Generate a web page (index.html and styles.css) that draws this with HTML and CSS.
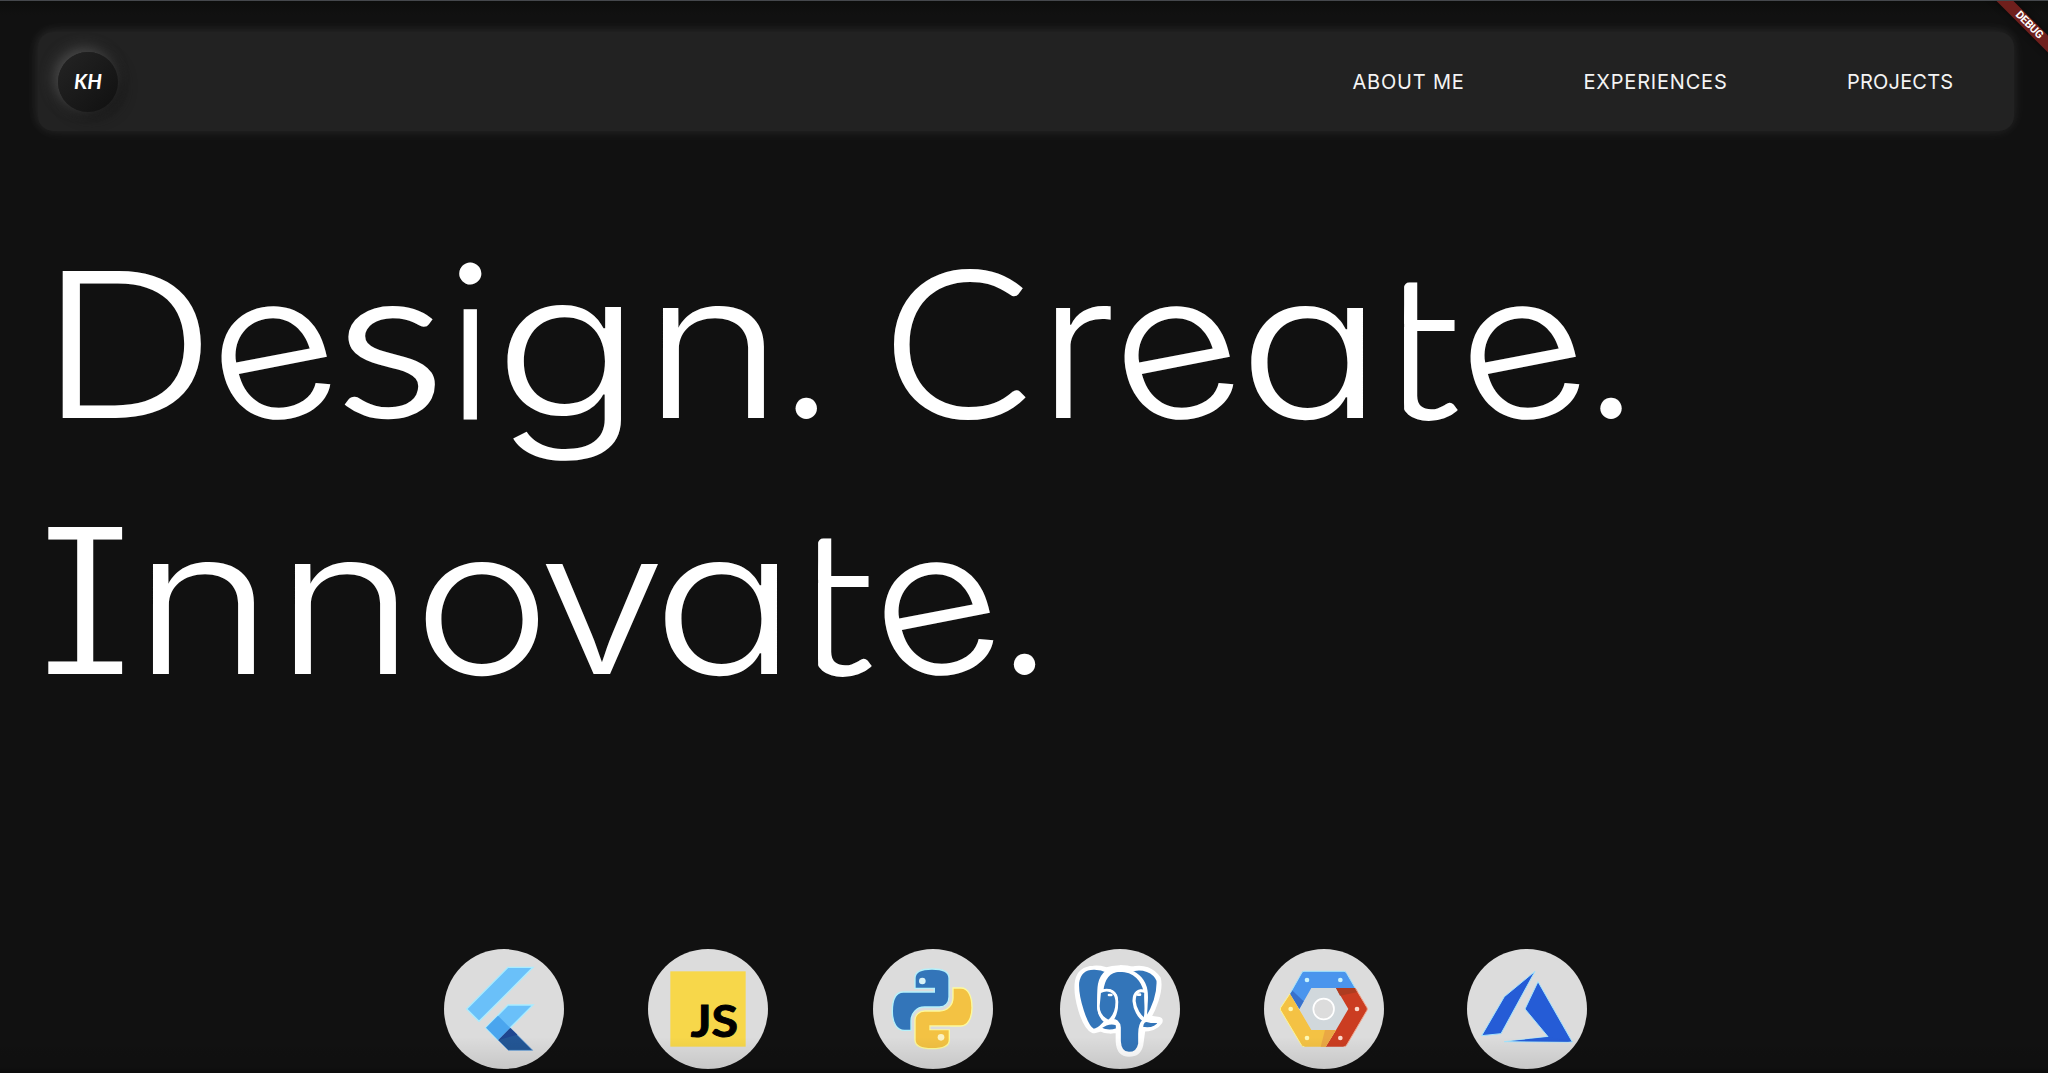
FILE: index.html
```
<!DOCTYPE html>
<html lang="en">
<head>
<meta charset="utf-8">
<title>KH</title>
<link rel="stylesheet" href="styles.css">
</head>
<body>
<div class="page">
  <header class="bar">
    <a class="logo"><span>KH</span></a>
    <nav class="nav">
      <a class="nav-about">ABOUT ME</a>
      <a class="nav-exp">EXPERIENCES</a>
      <a class="nav-proj">PROJECTS</a>
    </nav>
  </header>

  <h1 class="hero">
    <span class="line line-one"><span class="D">D</span><span class="e">e</span><span class="s">s</span><span class="i">i</span><span class="g">g</span><span class="n">n</span><span class="dot">.</span><span class="space"> </span><span class="C">C</span><span class="r">r</span><span class="e">e</span><span class="a">a</span><span class="t">t</span><span class="e">e</span><span class="dot">.</span></span>
    <span class="line line-two"><span class="I">I</span><span class="n">n</span><span class="n">n</span><span class="o">o</span><span class="v">v</span><span class="a">a</span><span class="t">t</span><span class="e">e</span><span class="dot">.</span></span>
  </h1>

  <div class="skills">
    <div class="skill">
      <svg viewBox="42 54 360 360">
        <g stroke="#a9ecff" stroke-width="4">
          <path fill="#6ac0f9" d="M234 109H309L147 271 110 234Z"/>
          <path fill="#6ac0f9" d="M234 222H309L204 327 167 290Z"/>
        </g>
        <path fill="#4aa5ee" d="M204 254L241 291 204 327 168 290Z"/>
        <path fill="#235695" stroke="#5c9ee0" stroke-width="2" d="M241 291L308 358H235L204 327Z"/>
        <path fill="#1f4690" d="M241 291L262 311 206 327Z"/>
      </svg>
    </div>
    <div class="skill">
      <svg viewBox="54 54 360 360">
        <rect x="121" y="121" width="226" height="226" fill="#f7d74a"/>
        <text class="js" x="182" y="319" textLength="142" lengthAdjust="spacingAndGlyphs">JS</text>
      </svg>
    </div>
    <div class="skill">
      <svg viewBox="69 54 360 360">
        <path fill="#3375b9" stroke="#b5f1fb" stroke-width="4" d="M246 114C212 114 195 121 195 141V172H253V183H160C138 183 127 206 127 241C127 277 141 298 163 298H183V270C183 247 199 228 224 228H268C286 228 297 215 297 198V141C297 121 279 114 246 114Z"/>
        <path fill="#f3c243" stroke="#fdfa9c" stroke-width="4" d="M246 353C212 353 195 345 195 326V268C195 250 209 240 224 240H268C294 240 309 220 309 200V171H333C354 171 366 195 366 230C366 263 352 285 333 285H240V296H298V326C298 346 279 353 246 353Z"/>
        <path fill="#dcdcdc" d="M242 287H300V295H242Z"/>
        <circle cx="217" cy="150" r="10" fill="#d9f2f7"/>
        <circle cx="273" cy="319" r="10" fill="#fbf3c4"/>
      </svg>
    </div>
    <div class="skill">
      <svg viewBox="59 54 360 360">
        <g stroke="#fff" stroke-linejoin="round" stroke-linecap="round">
          <path fill="#fff" stroke-width="24" d="M160 116C180 114 190 119 199 121C222 112 256 113 275 119C308 110 334 122 350 145C358 178 336 232 318 262C332 268 345 268 355 270C346 284 330 290 304 290L297 340C293 359 281 365 266 365C246 365 239 350 238 330V290C220 298 195 298 182 289L160 295C135 285 108 195 116 150C121 127 136 117 160 116Z"/>
          <path fill="#3375b9" stroke-width="7" d="M199 121C173 140 173 170 174 225C174 246 182 262 195 272C183 284 174 297 160 297C138 288 110 200 113 155C118 123 138 112 163 113C180 114 190 117 199 121Z"/>
          <path fill="#3375b9" stroke-width="7" d="M270 120C306 107 342 123 352 149C354 190 337 232 317 264C315 230 323 206 318 178C313 148 293 128 270 120Z"/>
          <path fill="#3375b9" stroke-width="9" d="M184 183C188 143 207 119 238 118C284 118 308 149 315 184C296 172 280 185 281 211C283 235 296 258 311 268C300 278 298 290 298 308V338C294 360 281 367 266 367C246 367 238 350 237 330V290C236 274 224 266 214 268C223 256 230 238 229 210C228 184 211 172 184 183Z"/>
          <path fill="#3375b9" stroke-width="8" d="M178 183C203 170 226 181 229 207C231 236 220 258 205 271C188 263 174 247 174 225Z"/>
          <path fill="#3375b9" stroke-width="8" d="M316 183C297 173 282 186 282 210C284 234 299 256 313 266C321 238 313 209 316 183Z"/>
          <path fill="#3375b9" stroke-width="5" d="M180 291C198 278 214 274 229 281V294C212 300 194 298 180 291Z"/>
          <path fill="#3375b9" stroke-width="5" d="M306 290C306 274 313 267 326 272C338 276 348 273 357 272C348 288 329 294 306 290Z"/>
          <path fill="none" stroke-width="8" d="M206 192H213M293 191H299"/>
        </g>
      </svg>
    </div>
    <div class="skill">
      <svg viewBox="71 54 360 360">
        <path fill="#d1d8dc" d="M213 171H288L324 234 288 297H213L177 234Z"/>
        <path fill="#4a95ed" d="M190 121H311Q316 121 319 127L345 171H213L177 234 149 188 184 126Q186 121 190 121Z"/>
        <path fill="#3871cb" d="M149 188L155 178 190 211 177 234Z"/>
        <path fill="#cb3d21" d="M287 171H345L380 230Q382 234 380 238L319 342Q316 347 311 347H256L287 297 324 234Z"/>
        <path fill="#ae3c20" d="M287 171H345L353 183 299 194Z"/>
        <path fill="#f4c244" d="M149 188L213 297H287L256 347H191Q186 347 183 342L121 238Q119 234 121 230Z"/>
        <path fill="#eaa844" d="M254 297H287L256 347H241Z"/>
        <g fill="none" stroke-width="3" stroke-linecap="round">
          <path stroke="#a8e5fb" d="M150 186L184 126Q186 121 191 121H311Q316 121 319 127L344 170"/>
          <path stroke="#fdf694" d="M148 189L121 230Q119 234 121 238L183 342Q186 347 191 347"/>
          <path stroke="#f0a68e" d="M346 173L380 230Q382 234 380 238L319 342Q316 347 311 347"/>
        </g>
        <circle cx="250" cy="234" r="31" fill="#dcdcdc" stroke="#fff" stroke-width="5"/>
        <g>
          <circle cx="200" cy="147" r="7" fill="#c9f3fd"/><circle cx="300" cy="147" r="7" fill="#c9f3fd"/>
          <circle cx="151" cy="234" r="7" fill="#fdf9b4"/><circle cx="200" cy="321" r="7" fill="#fdf9b4"/>
          <circle cx="350" cy="234" r="7" fill="#fbd9cb"/><circle cx="300" cy="321" r="7" fill="#fbd9cb"/>
        </g>
      </svg>
    </div>
    <div class="skill">
      <svg viewBox="82 54 360 360">
        <g fill="#255cd6" stroke="#a4e4fd" stroke-width="3">
          <path d="M286 121L184 308 126 314 194 197Z"/>
          <path d="M295 152L398 333 194 332 325 317 256 234Z"/>
        </g>
        <path fill="#255cd6" d="M215 330L325 318 396 332Z"/>
      </svg>
    </div>
  </div>

  <div class="shade"></div>
  <div class="debug"><span>DEBUG</span></div>
</div>
</body>
</html>
```
FILE: styles.css
```
* { box-sizing: border-box; }
body { margin: 0; background: #111; color: #fff; }

.page {
  position: relative;
  width: 2048px;
  height: 1073px;
  overflow: hidden;
  padding-top: 31px;
  border-top: 1px solid #45484c;
  background: linear-gradient(#0d0e0c, #111 14px);
}

/* navigation */
.bar {
  display: flex;
  align-items: center;
  height: 99px;
  margin: 0 34px 0 38px;
  padding: 0 20px;
  border-radius: 15px;
  background: #222;
  box-shadow: -1px -1px 12px rgba(255, 255, 255, .09), 0 0 22px rgba(255, 255, 255, .04);
}
.logo {
  display: flex;
  align-items: center;
  justify-content: center;
  width: 60px;
  height: 60px;
  border-radius: 50%;
  background: linear-gradient(135deg, #242424, #101010);
  box-shadow: -4px -4px 14px #4a4a4a, 4px 4px 14px #161616;
  font: italic 700 20.5px/58px Lato, sans-serif;
}
.logo span { transform: translateY(-1px); }
.nav {
  display: flex;
  margin-left: auto;
  font: 380 20px/28px Inter, sans-serif;
  color: #f4f4f4;
}
.nav-about { width: 231px; letter-spacing: .8px; }
.nav-exp { width: 263.5px; letter-spacing: .8px; }
.nav-proj { width: 147px; letter-spacing: .2px; }

/* headline: every letter sits in a cell of its own width */
.hero {
  margin: 86px 0 0;
  font: 300 202px/256px Inter, sans-serif;
  font-feature-settings: "cv11", "cv08";
}
.line { display: flex; height: 256px; }
.line-one { padding-left: 39px; }
.line-two { padding-left: 38px; }
.line span { flex: none; transform-origin: 0 201px; white-space: pre; }
.line .D { width: 177.7px; font-weight: 290; transform: scaleX(1.223); }
.line .e {
  width: 115.3px;
  font-weight: 320;
  transform-origin: 59px 146.5px;
  transform: translateX(-1px) scaleX(1.1) rotate(-12deg);
}
.line .s {
  width: 114.3px;
  font: 300 210px/240.5px Lato, sans-serif;
  -webkit-text-stroke: 4.5px #fff;
  transform: translate(5px, -3px) scale(1.2, 1.01);
}
.line .i {
  width: 47.7px;
  font: 300 216px/236px Lato, sans-serif;
  -webkit-text-stroke: 3px #fff;
  transform: translate(0, -.5px);
}
.line .g { width: 149.3px; transform: translateY(-1px) scaleX(1.211); }
.line .n { width: 134.6px; transform: scaleX(1.186); }
.line .dot { width: 57px; }
.line .space { width: 46.2px; }
.line .C {
  width: 156.5px;
  font: 300 202px/246.6px Lato, sans-serif;
  -webkit-text-stroke: 4px #fff;
  transform: translate(2.4px, -2.5px) scale(1.07, 1.005);
}
.line .r { width: 82.3px; font-weight: 320; transform: scaleX(1.073); }
.line .r + .e { width: 118.6px; }
.line .a { width: 139.7px; transform: scaleX(1.194); }
.line .t {
  width: 87.9px;
  font: 300 198px/249.7px Lato, sans-serif;
  -webkit-text-stroke: 4px #fff;
  transform: translate(-.9px, -1.5px) scaleX(1.2);
  clip-path: inset(0 -20px 0 22.5px);
}
.line .t + .e { width: 116.5px; }
.line .I { width: 95.3px; transform: translateX(-1px) scaleX(1.14); }
.line .I + .n { width: 142.1px; }
.line .n + .n { width: 137.9px; }
.line .o { width: 124.7px; transform: scaleX(1.151); }
.line .v { width: 114px; transform: scaleX(1.138); }

/* technology badges */
.skills { display: flex; margin: 220px 0 0 444px; }
.skill {
  flex: none;
  width: 120px;
  height: 120px;
  border-radius: 50%;
  background: #dcdcdc;
  margin-right: 84px;
}
.skill:nth-child(2) { margin-right: 105px; }
.skill:nth-child(3) { margin-right: 66.5px; }
.skill:nth-child(5) { margin-right: 83.5px; }
.skill svg { display: block; width: 120px; height: 120px; }
.js { font: 700 134px Lato, sans-serif; stroke: #000; stroke-width: 3; }

.shade {
  position: absolute;
  inset: auto 0 0;
  height: 36px;
  background: linear-gradient(rgba(0, 0, 0, 0), rgba(0, 0, 0, .09) 85%, rgba(0, 0, 0, .4));
}
.debug {
  position: absolute;
  top: 0;
  right: 0;
  width: 70px;
  height: 70px;
  overflow: hidden;
}
.debug span {
  position: absolute;
  left: .5px;
  top: 17.5px;
  width: 100px;
  height: 12px;
  transform: rotate(45deg);
  background: #6f1f1c;
  box-shadow: 0 0 6px rgba(0, 0, 0, .5);
  font: 700 11px/12.5px Roboto, sans-serif;
  letter-spacing: -.3px;
  text-align: center;
}
```
